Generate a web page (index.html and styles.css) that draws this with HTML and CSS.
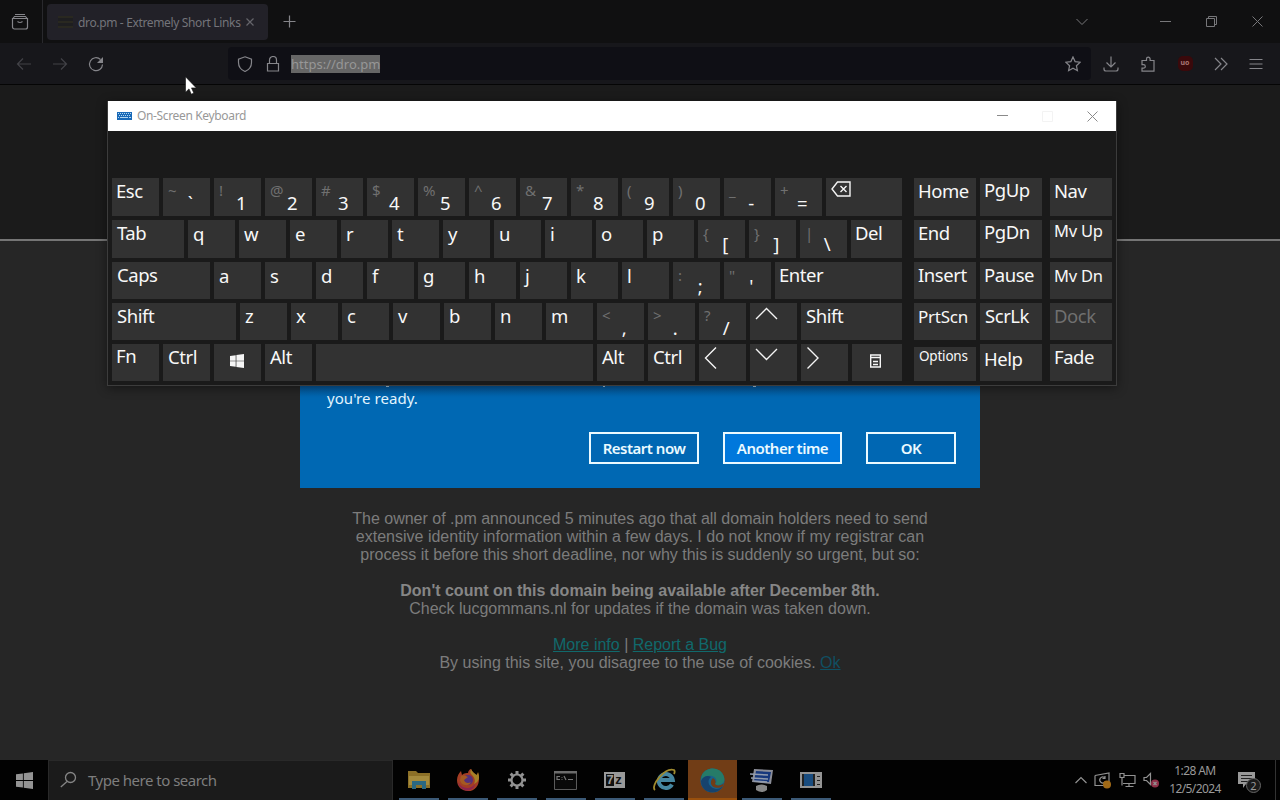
FILE: index.html
```
<!DOCTYPE html>
<html lang="en">
<head>
  <meta charset="UTF-8">
  <meta name="viewport" content="width=device-width, initial-scale=1.0">
  <link rel="stylesheet" href="styles.css">
  <title>dro.pm - Extremely Short Links</title>
</head>
<body>
  <div class="desktop">
    <!-- browser -->
    <div class="tabs">
      <div class="tabs-view">
        <svg width="18" height="18" viewBox="0 0 18 18"><path d="M4 1.500h10M1.500 5.500h15v8.500a2 2 0 0 1-2 2h-11a2 2 0 0 1-2-2zM1.500 6L3.500 3.500h11l2 2.500M6.500 8.500q2.500 2 5 0"/></svg>
      </div>
      <div class="tab">
        <span class="favicon"></span>
        <span class="tab-title">dro.pm - Extremely Short Links</span>
        <svg width="8" height="8" viewBox="0 0 8 8"><path d="M.5.5l7 7M7.500.5l-7 7"/></svg>
      </div>
      <svg class="new-tab" width="13" height="13" viewBox="0 0 13 13"><path d="M6.500.5v12M.5 6.500h12"/></svg>
      <div class="window-buttons">
        <svg class="all-tabs" width="12" height="8" viewBox="0 0 12 8"><path d="M.5 1L6 6.500 11.500 1"/></svg>
        <svg width="11" height="11" viewBox="0 0 11 11"><path d="M0 5.500h11"/></svg>
        <svg width="11" height="11" viewBox="0 0 11 11"><path d="M.5 2.500h8v8h-8zM2.500 2.500v-2h8v8h-2"/></svg>
        <svg width="11" height="11" viewBox="0 0 11 11"><path d="M.5.5l10 10M10.500.5l-10 10"/></svg>
      </div>
    </div>
    <div class="toolbar">
      <div class="nav">
        <svg class="off" width="16" height="16" viewBox="0 0 16 16"><path d="M15 8H1.500M7 2.500L1.500 8 7 13.500"/></svg>
        <svg class="off" width="16" height="16" viewBox="0 0 16 16"><path d="M1 8h13.500M9 2.500L14.500 8 9 13.500"/></svg>
        <svg width="16" height="16" viewBox="0 0 16 16"><path d="M12.500 3.500A6.500 6.500 0 1 0 14.500 8.500"/><path class="fill" d="M15 1v6H9z"/></svg>
      </div>
      <div class="urlbar">
        <svg width="16" height="16" viewBox="0 0 16 16"><path d="M8 .8l6.500 2.400v3.300c0 4.500-3 7.500-6.500 9-3.500-1.500-6.500-4.500-6.500-9V3.200z"/></svg>
        <svg width="14" height="16" viewBox="0 0 14 16"><path d="M1.500 7.500h11v7.500h-11zM3.500 7.500V4a3.500 3.500 0 0 1 7 0v3.500"/></svg>
        <span class="url">https://dro.pm</span>
        <svg class="star" width="16" height="16" viewBox="0 0 16 16"><path d="M8 .9l2.100 4.700 5.100.6-3.800 3.500 1 5L8 12.200l-4.400 2.500 1-5L.8 6.200l5.100-.6z"/></svg>
      </div>
      <div class="tools">
        <svg width="16" height="16" viewBox="0 0 16 16"><path d="M8 .5v10M3.500 6.500L8 11l4.500-4.500M1 11.500v1.500a2 2 0 0 0 2 2h10a2 2 0 0 0 2-2v-1.500"/></svg>
        <svg width="16" height="16" viewBox="0 0 16 16"><path d="M2 4.500h4.500V3a1.800 1.800 0 0 1 3.600 0v1.500H14v10.700H2v-3h1.500a1.800 1.800 0 0 0 0-3.600H2z"/></svg>
        <span class="ublock">uo</span>
        <svg width="14" height="14" viewBox="0 0 14 14"><path d="M1 1l6 6-6 6M7 1l6 6-6 6"/></svg>
        <svg width="14" height="12" viewBox="0 0 14 12"><path d="M.5 1.500h13M.5 6h13M.5 10.500h13"/></svg>
      </div>
    </div>
    <div class="page">
      <div class="page-head"></div>
      <div class="notice">
        <p>The owner of .pm announced 5 minutes ago that all domain holders need to send<br>extensive identity information within a few days. I do not know if my registrar can<br>process it before this short deadline, nor why this is suddenly so urgent, but so:</p>
        <p><b>Don't count on this domain being available after December 8th.</b><br>Check lucgommans.nl for updates if the domain was taken down.</p>
        <p><a>More info</a> | <a>Report a Bug</a><br>By using this site, you disagree to the use of cookies. <a class="ok">Ok</a></p>
      </div>
    </div>

    <!-- taskbar -->
    <div class="taskbar">
      <div class="start">
        <svg width="17" height="17" viewBox="0 0 16 16"><path d="M0 2.200l6.500-.9v6.300H0zM7.300 1.200L16 0v7.600H7.300zM0 8.400h6.500v6.300L0 13.800zM7.300 8.400H16V16l-8.700-1.200z"/></svg>
      </div>
      <div class="search">
        <svg width="17" height="17" viewBox="0 0 17 17"><circle cx="10.500" cy="6.500" r="5"/><path d="M7 10.500L.8 16"/></svg>
        <span>Type here to search</span>
      </div>
      <div class="apps">
        <div class="app"><svg width="22" height="20" viewBox="0 0 22 20"><path fill="#8c7027" d="M0 1h8l2 2h12v15H0z"/><path fill="#a58b3d" d="M1 6h20v9H1z"/><path fill="#2b6882" d="M4 19v-8h14v8h-4v-4H8v4z"/></svg></div>
        <div class="app"><svg width="24" height="24" viewBox="0 0 24 24"><path fill="#a33d24" d="M1 12C1 8 3 5 5 3l1 4c2-2 5-2 6-2 0-2 2-4 3-4 1 3 4 4 5 7l2-3c3 9-1 18-10 18C6 23 1 19 1 12z"/><path fill="#a68127" d="M15 1c-1 3-1 4 1 6s4 5 2 9c7-3 5-9 4-12l-1 3c-2-1-5-3-6-6z"/><path fill="#8d244d" d="M2 14c3 7 13 8 17 2-1 9-15 9-17-2z"/><circle cx="12" cy="12" r="5" fill="#563078"/><path fill="#a55a22" d="M5 8c3-1 5 0 7 1l-4 3c1 3 4 4 7 2-2 5-10 4-11-2z"/></svg></div>
        <div class="app"><svg width="20" height="20" viewBox="0 0 20 20" fill="none" stroke="#929292"><circle cx="10" cy="10" r="5.500" stroke-width="2.200"/><path stroke-width="3" d="M10 1v3M10 16v3M1 10h3M16 10h3M3.600 3.600l2.200 2.200M14.200 14.200l2.200 2.200M16.400 3.600l-2.200 2.200M5.800 14.200l-2.200 2.200"/></svg></div>
        <div class="app"><svg width="23" height="19" viewBox="0 0 23 19"><path fill="#090909" stroke="#5a5a5a" d="M.5.5h22v18H.5z"/><path fill="#6c6c6c" d="M0 0h23v2.500H0z"/><path stroke="#777" stroke-width="1.200" fill="none" d="M6 5.500H3v3h3M8 6v.8M8 8v.8M10 5l2 4M14 8.500h5"/></svg></div>
        <div class="app"><div class="zip"><span>7</span><span class="z">z</span></div></div>
        <div class="app"><svg width="24" height="24" viewBox="0 0 24 24" fill="none"><path stroke="#4686a0" stroke-width="4" d="M20 16.500a7 7 0 1 1 .8-4.500H7"/><path stroke="#a18b2f" stroke-width="1.800" d="M3 22C-2 18 13-1 22 2c1 1 1 2 0 4"/></svg></div>
        <div class="app active"><svg width="25" height="25" viewBox="0 0 25 25"><circle cx="12.500" cy="12.500" r="12" fill="#17618b"/><path fill="#267b68" d="M2 7C6-2 21-2 24 9c2 8-6 9-9 7 3-3 1-7-3-8-5-1-9 1-11 4z"/><path fill="#16436d" d="M1 13c2-5 7-6 10-4-5 4-2 11 5 12 3 0 5-1 7-3-5 10-22 8-22-5z"/><path fill="#713d16" d="M13 10c3 2 3 4 2 6 3 3 7 1 9-1l-1 3c-5 4-13 1-12-4 0-2 1-3 2-4z"/></svg></div>
        <div class="app"><svg width="24" height="23" viewBox="0 0 24 23"><path fill="#8b8d98" d="M4 0l19 1-2 14L2 13z"/><path fill="#17387d" d="M6 2l15 1-2 10-15-1z"/><path stroke="#929cae" stroke-width="1.500" d="M0 5l18 1M1 9l17 1M4 12l13 1"/><path fill="#888" d="M6 17q5-3 11 0v4q-5 4-11 0z"/></svg></div>
        <div class="app"><svg width="22" height="16" viewBox="0 0 22 16"><path fill="#949494" d="M0 0h22v16H0z"/><path fill="#222" d="M2 2h13v12H2z"/><path fill="#194c7f" d="M4 2h9v12H4z"/><path stroke="#222" stroke-width="1" d="M17 4.500h3M17 8.500h3M17 12.500h3"/></svg></div>
      </div>
      <div class="tray">
        <svg width="12" height="8" viewBox="0 0 12 8"><path d="M.5 7L6 1.500 11.500 7"/></svg>
        <svg width="18" height="17" viewBox="0 0 18 17"><path d="M1 3.500L15 1v9M1 3.500v10h9M10.500 5.500A3 3 0 1 0 11 10M11 4v2.500H8.500"/><circle cx="13" cy="12.500" r="4" class="orange"/></svg>
        <svg width="17" height="16" viewBox="0 0 17 16"><path d="M5 3.500h11v8H4M10 11.500v3M6.500 14.500h8M1 1.500h4v4H1zM3 5.500v8"/></svg>
        <svg width="17" height="16" viewBox="0 0 17 16"><path d="M1 5.500h2.500l4-4v11l-4-4H1z"/><circle cx="12" cy="11.500" r="4" class="pink"/><path d="M10.500 10l3 3M13.500 10l-3 3"/></svg>
        <div class="clock">1:28 AM<br>12/5/2024</div>
        <div class="messages">
          <svg width="17" height="16" viewBox="0 0 17 16"><path class="bubble" d="M0 0h17v12H8l-3 4v-4H0z"/><path class="lines" d="M3 3.500h11M3 6.500h11M3 9.500h7"/></svg>
          <span class="count">2</span>
        </div>
      </div>
    </div>

    <!-- restart dialog -->
    <div class="dialog">
      <svg class="descenders" width="380" height="2" viewBox="0 0 380 2"><path d="M0 1h3M217 1h2M367 1h3"/></svg>
      <p>you're ready.</p>
      <div class="dialog-buttons">
        <button class="restart">Restart now</button>
        <button class="another">Another time</button>
        <button class="okay">OK</button>
      </div>
    </div>

    <!-- on-screen keyboard -->
    <div class="osk">
      <div class="osk-title">
        <svg class="osk-icon" width="15" height="8" viewBox="0 0 15 8"><path fill="#1a6ab8" d="M0 0h15v8H0z"/><path stroke="#b4d6f0" stroke-dasharray="1 1" d="M1 1.500h13M2 3.500h12"/><path stroke="#b4d6f0" d="M1 5.500h1M3 5.500h8M12 5.500h2"/></svg>
        <span>On-Screen Keyboard</span>
        <div class="osk-buttons">
          <svg width="11" height="11" viewBox="0 0 11 11"><path d="M0 4.500h11"/></svg>
          <svg class="disabled" width="11" height="11" viewBox="0 0 11 11"><path d="M.5.5h10v10H.5z"/></svg>
          <svg width="11" height="11" viewBox="0 0 11 11"><path d="M.5.5l10 10M10.500.5l-10 10"/></svg>
        </div>
      </div>
      <div class="keys">
        <div class="main">
          <div class="row tall">
            <div class="key esc">Esc</div>
            <div class="key"><i>~</i><b>`</b></div>
            <div class="key"><i>!</i><b>1</b></div>
            <div class="key"><i>@</i><b>2</b></div>
            <div class="key"><i>#</i><b>3</b></div>
            <div class="key"><i>$</i><b>4</b></div>
            <div class="key"><i>%</i><b>5</b></div>
            <div class="key"><i>^</i><b>6</b></div>
            <div class="key"><i>&amp;</i><b>7</b></div>
            <div class="key"><i>*</i><b>8</b></div>
            <div class="key"><i>(</i><b>9</b></div>
            <div class="key"><i>)</i><b>0</b></div>
            <div class="key"><i>_</i><b>-</b></div>
            <div class="key"><i>+</i><b>=</b></div>
            <div class="key grow"><svg class="back" width="21" height="16" viewBox="0 0 21 16"><path d="M6.500 1H19v14H6.500L1 8zM9.500 5l6 6M15.500 5l-6 6"/></svg></div>
          </div>
          <div class="row tall low">
            <div class="key grow tab-key">Tab</div>
            <div class="key">q</div>
            <div class="key">w</div>
            <div class="key">e</div>
            <div class="key">r</div>
            <div class="key">t</div>
            <div class="key">y</div>
            <div class="key">u</div>
            <div class="key">i</div>
            <div class="key">o</div>
            <div class="key">p</div>
            <div class="key"><i>{</i><b>[</b></div>
            <div class="key"><i>}</i><b>]</b></div>
            <div class="key"><i>|</i><b>\</b></div>
            <div class="key del">Del</div>
          </div>
          <div class="row low">
            <div class="key caps">Caps</div>
            <div class="key">a</div>
            <div class="key">s</div>
            <div class="key">d</div>
            <div class="key">f</div>
            <div class="key">g</div>
            <div class="key">h</div>
            <div class="key">j</div>
            <div class="key">k</div>
            <div class="key">l</div>
            <div class="key"><i>:</i><b>;</b></div>
            <div class="key"><i>"</i><b>'</b></div>
            <div class="key grow enter">Enter</div>
          </div>
          <div class="row">
            <div class="key shift">Shift</div>
            <div class="key">z</div>
            <div class="key">x</div>
            <div class="key">c</div>
            <div class="key">v</div>
            <div class="key">b</div>
            <div class="key">n</div>
            <div class="key">m</div>
            <div class="key"><i>&lt;</i><b>,</b></div>
            <div class="key"><i>&gt;</i><b>.</b></div>
            <div class="key"><i>?</i><b>/</b></div>
            <div class="key"><svg class="arrow" width="23" height="23" viewBox="0 0 23 23"><path d="M1 13L11.500 2.500 22 13"/></svg></div>
            <div class="key grow">Shift</div>
          </div>
          <div class="row">
            <div class="key fn">Fn</div>
            <div class="key">Ctrl</div>
            <div class="key"><svg class="win" width="14" height="14" viewBox="0 0 16 16"><path d="M0 2.200l6.500-.9v6.300H0zM7.300 1.200L16 0v7.600H7.300zM0 8.400h6.500v6.300L0 13.800zM7.300 8.400H16V16l-8.700-1.200z"/></svg></div>
            <div class="key">Alt</div>
            <div class="key grow"></div>
            <div class="key">Alt</div>
            <div class="key">Ctrl</div>
            <div class="key"><svg class="arrow" width="23" height="23" viewBox="0 0 23 23"><path d="M12 .5L1.500 11 12 21.500"/></svg></div>
            <div class="key"><svg class="arrow" width="23" height="23" viewBox="0 0 23 23"><path d="M1 2l10.500 10.500L22 2"/></svg></div>
            <div class="key"><svg class="arrow" width="23" height="23" viewBox="0 0 23 23"><path d="M1.500.5L12 11 1.500 21.500"/></svg></div>
            <div class="key menu"><svg class="app-menu" width="11" height="14" viewBox="0 0 11 14"><path d="M.7 1h9.600v12H.7zM1 3.500h9M3 7.500h5M3 10.500h5"/></svg></div>
          </div>
        </div>
        <div class="side">
          <div class="row tall"><div class="key">Home</div><div class="key up">PgUp</div><div class="key last">Nav</div></div>
          <div class="row tall"><div class="key">End</div><div class="key up">PgDn</div><div class="key last mid">Mv Up</div></div>
          <div class="row"><div class="key">Insert</div><div class="key">Pause</div><div class="key last mid down">Mv Dn</div></div>
          <div class="row"><div class="key narrow">PrtScn</div><div class="key scroll">ScrLk</div><div class="key last dim">Dock</div></div>
          <div class="row"><div class="key small">Options</div><div class="key help">Help</div><div class="key last">Fade</div></div>
        </div>
      </div>
    </div>

    <svg class="cursor" width="12" height="19" viewBox="0 0 12 19"><path d="M.5.8v15.400l3.500-3.300 2.300 5.300 2.500-1.100-2.300-5.200h4.800z"/></svg>
  </div>
</body>
</html>
```
FILE: styles.css
```
body {
  margin: 0;
  background-color: #262626;
  font-family: "Noto Sans", "Open Sans", sans-serif;
}

svg {
  display: block;
  flex-shrink: 0;
}

.desktop {
  position: relative;
  width: 1280px;
  height: 800px;
  display: flex;
  flex-direction: column;
  overflow: hidden;
}

/* browser */
.tabs {
  height: 43px;
  display: flex;
  align-items: center;
  background-color: #101011;
}

.tabs svg, .toolbar svg {
  fill: none;
  stroke: #85858a;
  stroke-width: 1.2;
}

.tabs-view {
  width: 31px;
  height: 43px;
  padding-left: 11px;
  display: flex;
  align-items: center;
  border-right: 1px solid #29292d;
}

.tab {
  width: 202px;
  height: 36px;
  margin-left: 4px;
  padding: 0 8px 0 11px;
  display: flex;
  align-items: center;
  background-color: #222128;
  border-radius: 4px;
}

.tabs .tab svg {
  stroke: #65656b;
}

.favicon {
  width: 15px;
  height: 12px;
  margin-right: 5px;
  background: repeating-linear-gradient(#292820 0 2px, #1e1e20 2px 5px);
}

.tab-title {
  width: 168px;
  margin-top: 1px;
  color: #74747a;
  font-size: 12px;
  letter-spacing: -0.35px;
  white-space: nowrap;
}

.tabs .new-tab {
  margin-left: 15px;
}

.window-buttons {
  margin-left: auto;
  margin-right: 17px;
  display: flex;
  align-items: center;
  gap: 35px;
}

.tabs .window-buttons svg {
  stroke: #77777a;
  stroke-width: 1;
}

.tabs .all-tabs {
  margin-right: 37px;
}

.toolbar {
  height: 41px;
  display: flex;
  align-items: center;
  background-color: #17171b;
  border-bottom: 1px solid #050505;
}

.nav {
  width: 212px;
  padding-left: 16px;
  display: flex;
  gap: 20px;
}

.toolbar .off {
  stroke: #424247;
}

.toolbar .fill {
  fill: #85858a;
  stroke: none;
}

.urlbar {
  box-sizing: border-box;
  width: 863px;
  height: 33px;
  padding: 0 10px 0 9px;
  display: flex;
  align-items: center;
  background-color: #0f0f15;
  border-radius: 4px;
}

.urlbar svg {
  margin-right: 13px;
}

.url {
  height: 18px;
  margin-left: -2px;
  line-height: 19px;
  background-color: #666;
  color: #979797;
  font-size: 13px;
}

.toolbar .star {
  margin-left: auto;
  margin-right: 0;
}

.tools {
  flex: 1;
  padding: 0 17px 0 12px;
  display: flex;
  align-items: center;
  justify-content: space-between;
}

.ublock {
  width: 15px;
  height: 15px;
  line-height: 14px;
  text-align: center;
  border-radius: 5px;
  background-color: #3a090b;
  color: #a77;
  font-size: 7px;
  font-weight: bold;
}

.page {
  flex: 1;
  font-family: "Liberation Sans", Arial, sans-serif;
}

.page-head {
  height: 154px;
  background-color: #1b1b1b;
  border-bottom: 2px solid #757575;
}

.notice {
  padding-top: 269px;
  text-align: center;
  font-size: 16px;
  line-height: 18px;
  color: #7c7c7c;
}

.notice p {
  margin: 0 0 18px;
}

.notice b {
  color: #868686;
}

.notice a {
  color: #10696c;
  text-decoration: underline;
}

.notice .ok {
  color: #104f62;
}

/* taskbar */
.taskbar {
  height: 40px;
  display: flex;
  background-color: #020202;
}

.start {
  width: 48px;
  display: flex;
  align-items: center;
  justify-content: center;
}

.start svg {
  fill: #949494;
}

.search {
  box-sizing: border-box;
  width: 345px;
  padding-left: 11px;
  display: flex;
  align-items: center;
  gap: 11px;
  background-color: #1b1b1b;
  border: 1px solid #292929;
  border-bottom: none;
  color: #7e7e7e;
  font-size: 15px;
  letter-spacing: -0.5px;
}

.search span {
  margin-top: -2px;
}

.search svg {
  margin-top: -2px;
  fill: none;
  stroke: #858585;
  stroke-width: 1.3;
}

.apps {
  margin-left: 1px;
  display: flex;
}

.app {
  position: relative;
  width: 49px;
  height: 40px;
  display: flex;
  align-items: center;
  justify-content: center;
}

.app::after {
  content: "";
  position: absolute;
  left: 5px;
  right: 4px;
  bottom: 0;
  height: 2px;
  background-color: #3c5a77;
}

.app.active {
  background-color: #713d16;
}

.app.active::after {
  left: 0;
  right: 0;
  background-color: #99500d;
}

.zip {
  width: 17px;
  height: 12px;
  border: 2px solid #999;
  display: flex;
  background-color: #999;
  color: #111;
  font: bold 13px/11px "Liberation Sans", Arial, sans-serif;
}

.zip span {
  width: 8px;
  height: 12px;
  background-color: #111;
  color: #999;
  text-align: center;
}

.zip .z {
  width: 9px;
  background-color: #999;
  color: #111;
}

.tray {
  margin-left: auto;
  margin-right: 4px;
  padding-right: 11px;
  display: flex;
  align-items: center;
  gap: 7px;
  border-right: 1px solid #333;
}

.tray svg {
  fill: none;
  stroke: #929292;
  stroke-width: 1.2;
}

.tray .orange {
  fill: #a16a17;
  stroke: none;
}

.tray .pink {
  fill: #8f3048;
  stroke: none;
}

.clock {
  width: 56px;
  text-align: center;
  color: #999;
  font-size: 12px;
  line-height: 18px;
  letter-spacing: -0.6px;
}

.messages {
  position: relative;
  width: 26px;
  margin-left: 8px;
}

.tray .bubble {
  fill: #999;
  stroke: none;
}

.tray .lines {
  stroke: #222;
}

.count {
  position: absolute;
  left: 8px;
  top: 6px;
  width: 13px;
  height: 13px;
  line-height: 13px;
  text-align: center;
  border: 1px solid #666;
  border-radius: 50%;
  background-color: #1b1b1b;
  color: #999;
  font-size: 11px;
}

/* restart dialog */
.dialog {
  position: absolute;
  left: 300px;
  top: 385px;
  box-sizing: border-box;
  width: 680px;
  height: 103px;
  padding: 0 24px 24px 27px;
  background: linear-gradient(#05579a, #0068b3 12px);
  color: #e3f5ff;
}

.descenders {
  margin-left: 59px;
  fill: none;
  stroke: #a9c9e2;
  stroke-width: 2;
}

.dialog p {
  margin: 0;
  font-size: 15px;
  line-height: 22px;
  letter-spacing: 0.05px;
}

.dialog-buttons {
  margin-top: 23px;
  display: flex;
  justify-content: flex-end;
  gap: 24px;
}

.dialog button {
  height: 32px;
  padding: 0;
  border: 2px solid #ebfaff;
  background-color: #0067b3;
  color: #ebfaff;
  font: 600 15px "Noto Sans", "Open Sans", sans-serif;
  letter-spacing: -0.5px;
}

.dialog .restart {
  width: 110px;
}

.dialog .another {
  width: 119px;
  background-color: #0078dc;
}

.dialog .okay {
  width: 90px;
}

/* on-screen keyboard */
.osk {
  position: absolute;
  left: 107px;
  top: 101px;
  width: 1008px;
  height: 284px;
  border: 1px solid #3c3c3c;
  border-top: none;
  background-color: #1a1a1a;
  box-shadow: 0 2px 10px rgba(0, 0, 0, 0.45);
}

.osk-title {
  height: 30px;
  display: flex;
  align-items: center;
  padding: 0 18px 0 9px;
  background-color: #fff;
  color: #989898;
  font-size: 12px;
  letter-spacing: -0.35px;
}

.osk-title span {
  margin-top: -1px;
}

.osk-icon {
  margin-right: 5px;
}

.osk-buttons {
  margin-left: auto;
  display: flex;
  gap: 34px;
  fill: none;
  stroke: #8a8a8a;
}

.osk-buttons .disabled {
  stroke: #f3f3f3;
}

.keys {
  padding: 47px 4px 0;
  display: flex;
  gap: 12px;
}

.main {
  width: 790px;
}

.side {
  width: 198px;
}

.row {
  height: 37px;
  margin-bottom: 4px;
  display: flex;
  gap: 4px;
}

.row.tall {
  height: 38px;
}

.key {
  box-sizing: border-box;
  width: 47px;
  padding: 1px 0 0 5px;
  display: flex;
  background-color: #323232;
  color: #f8f8f8;
  font-size: 18.5px;
  line-height: 24px;
  letter-spacing: -0.45px;
  white-space: nowrap;
}

.low .key {
  padding-top: 2px;
}

.low .tab-key, .low .del, .low .caps, .low .enter {
  padding-top: 1px;
}

.key.esc, .key.fn, .low .del, .low .enter {
  padding-left: 4px;
}

.key.fn {
  padding-top: 0;
}

.key.grow {
  flex: 1;
}

.key.del {
  width: 51px;
}

.key.menu {
  width: 50px;
}

.key.caps {
  width: 98px;
}

.key.shift {
  width: 124px;
}

.key i {
  width: 12px;
  margin-top: -1px;
  color: #707070;
  font-size: 15px;
  font-style: normal;
}

.key b {
  width: 20px;
  margin-top: 12px;
  text-align: center;
  font-weight: normal;
}

.low .key b {
  margin-top: 10px;
}

.key svg {
  fill: none;
  stroke: #f5f5f5;
  stroke-width: 1.4;
}

.key .back {
  margin-top: 2px;
}

.key .arrow {
  margin-top: 2px;
}

.key .win {
  margin: 9px 0 0 11px;
  fill: #f5f5f5;
  stroke: none;
}

.key .app-menu {
  margin: 9px 0 0 13px;
}

.side .key {
  width: 62px;
  padding-left: 4px;
}

.side .last {
  margin-left: 4px;
}

.side .up {
  padding-top: 0;
}

.side .scroll {
  padding-left: 5px;
}

.side .mid {
  padding-top: 0;
  font-size: 16.5px;
  line-height: 22px;
  letter-spacing: -0.25px;
}

.side .down {
  padding-top: 3px;
}

.side .narrow {
  padding-top: 2px;
  font-size: 17px;
  letter-spacing: -0.25px;
}

.side .small {
  height: 34px;
  margin-top: 3px;
  padding-left: 5px;
  font-size: 13.5px;
  line-height: 17px;
  letter-spacing: -0.2px;
}

.side .help {
  padding-top: 3px;
}

.side .dim {
  color: #707070;
}

.cursor {
  position: absolute;
  left: 185px;
  top: 76px;
  fill: #fff;
  stroke: #111;
  stroke-width: 0.6;
}
```
